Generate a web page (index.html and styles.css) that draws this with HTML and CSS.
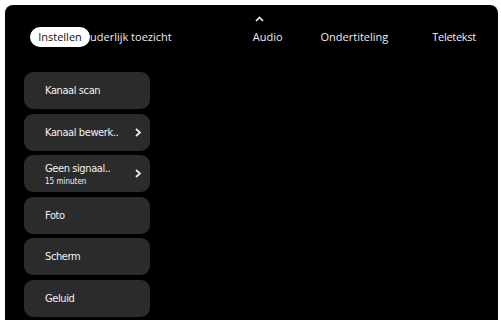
FILE: index.html
```html
<!DOCTYPE html>
<html lang="nl">
<head>
    <meta charset="UTF-8">
    <meta name="viewport" content="width=device-width, initial-scale=1.0">
    <title>Instellen</title>
    <link rel="stylesheet" href="styles.css">
</head>
<body>

    <div class="scherm">
        <nav class="tabs">
            <span class="tab tab-actief">Instellen</span>
            <span class="tab tab-half">uderlijk toezicht</span>
            <span class="tab tab-audio">Audio
                <svg class="pijl-op" width="9" height="6" viewBox="0 0 9 6"><polyline points="1,5 4.5,1.5 8,5" fill="none" stroke="#eee" stroke-width="1.7"/></svg>
            </span>
            <span class="tab tab-onder">Ondertiteling</span>
            <span class="tab tab-tele">Teletekst</span>
        </nav>

        <ul class="menu">
            <li class="item"><span class="label">Kanaal scan</span></li>
            <li class="item">
                <span class="label">Kanaal bewerk..</span>
                <svg class="chevron" width="6" height="9" viewBox="0 0 6 9"><polyline points="1,1 5,4.5 1,8" fill="none" stroke="#eee" stroke-width="1.8"/></svg>
            </li>
            <li class="item">
                <span class="label">Geen signaal..<small>15 minuten</small></span>
                <svg class="chevron" width="6" height="9" viewBox="0 0 6 9"><polyline points="1,1 5,4.5 1,8" fill="none" stroke="#eee" stroke-width="1.8"/></svg>
            </li>
            <li class="item"><span class="label">Foto</span></li>
            <li class="item"><span class="label">Scherm</span></li>
            <li class="item"><span class="label">Geluid</span></li>
        </ul>
    </div>

</body>
</html>
```

FILE: styles.css
```css
body { margin: 0; background: #fff; font-family: "Open Sans", sans-serif; }
.scherm { margin: 5px 3px 3px 5px; height: 315px; background: #000; border-radius: 8px 8px 0 0; padding-left: 19px; overflow: hidden; }

.tabs { display: flex; align-items: center; height: 20px; padding-top: 22px; color: #eee; font-size: 11px; white-space: nowrap; }
.tab { line-height: 20px; }
.tab-actief { background: #fff; color: #111; border-radius: 10px; width: 60px; margin-left: 6px; text-align: center; }
.tab-audio { position: relative; margin-left: 81px; }
.tab-onder { margin-left: 38px; }
.tab-tele { margin-left: 44px; letter-spacing: -0.3px; }
.pijl-op { position: absolute; left: 2px; top: -11px; }

.menu { list-style: none; margin: 25px 0 0; padding: 0; width: 126px; display: flex; flex-direction: column; gap: 4.5px; }
.item { height: 37px; background: #2b2b2b; border-radius: 9px; display: flex; align-items: center; justify-content: space-between; padding: 0 9px 0 21px; color: #f2f2f2; font-family: "DejaVu Sans Condensed", "DejaVu Sans", sans-serif; font-size: 11px; letter-spacing: -0.4px; }
.label small { display: block; font-size: 8px; letter-spacing: 0; margin-top: 2px; }
.chevron { flex: none; }
```
